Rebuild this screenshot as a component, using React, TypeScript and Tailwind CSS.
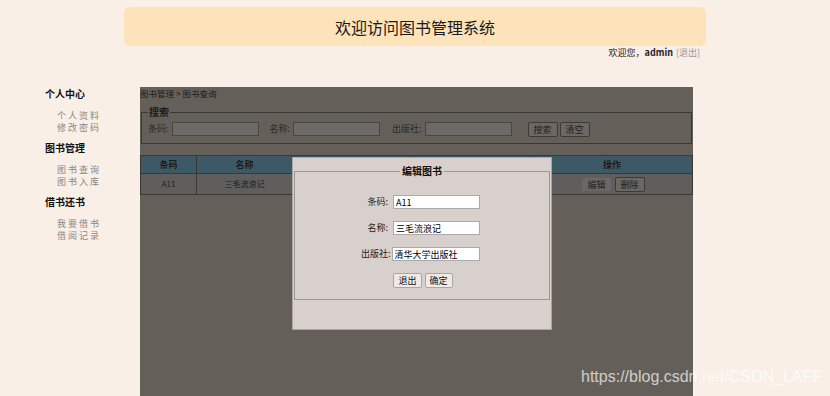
import React from 'react';

const font = { fontFamily: '"Noto Sans CJK SC", "Noto Sans", sans-serif' };

const menu = [
  { title: '个人中心', items: ['个人资料', '修改密码'] },
  { title: '图书管理', items: ['图书查询', '图书入库'] },
  { title: '借书还书', items: ['我要借书', '借阅记录'] },
];

function DimButton({ children, active }: { children: React.ReactNode; active?: boolean }) {
  return (
    <button
      className={
        'h-[15px] px-[5px] text-[9px] leading-none text-[#222] bg-[#6a6764] rounded-[2px] border ' +
        (active ? 'border-[#3d6590]' : 'border-[#3c3a38]')
      }
    >
      {children}
    </button>
  );
}

function ModalRow({ label, value, wide }: { label: string; value: string; wide?: boolean }) {
  return (
    <div className="flex items-center justify-center pr-[4px]">
      <span className={'text-[9px] text-[#222] text-right ' + (wide ? 'w-[30px]' : 'w-[28px] mr-[5px]')}>{label}</span>
      <input
        readOnly
        value={value}
        className={
          'h-[14px] bg-white border border-[#aaa] px-[2px] text-[9px] text-black outline-none ' +
          (wide ? 'w-[88px] ml-[1px]' : 'w-[87px]')
        }
      />
    </div>
  );
}

export default function App() {
  return (
    <div className="relative w-[830px] h-[396px] overflow-hidden bg-[#f9efe6]" style={font}>
      <div className="pt-[7px]">
        <div className="mx-auto w-[582px] h-[39px] rounded-[6px] bg-[#fde3b9] flex items-center justify-center text-[16px] text-[#1a1a1a]">
          欢迎访问图书管理系统
        </div>
        <div className="mx-auto w-[582px] flex justify-end pr-[6px] pt-[1px] text-[9px] leading-[12px] text-[#222]">
          欢迎您，<b className="font-bold">admin</b>
          <span className="ml-[3px] text-[#999]">[退出]</span>
        </div>
      </div>

      <div className="flex mt-[28px]">
        <div className="w-[140px] pl-[45px] pt-[1px]">
          {menu.map((g) => (
            <div key={g.title} className="mb-[8px]">
              <div className="text-[10px] font-bold leading-[12px] text-[#111]">{g.title}</div>
              <div className="mt-[10px] pl-[12px] flex flex-col">
                {g.items.map((it) => (
                  <span key={it} className="block h-[12px] text-[9px] leading-[12px] tracking-[2px] text-[#888]">
                    {it}
                  </span>
                ))}
              </div>
            </div>
          ))}
        </div>

        <div className="relative w-[553px] h-[320px] bg-[#646059]">
          <div className="text-[8.5px] leading-[12px] text-[#1c1c1c]">图书管理 &gt; 图书查询</div>
          <fieldset className="mx-[1px] mt-[7px] border border-[#3a3835] px-[6px] pb-[6px]">
            <legend className="text-[10px] font-bold px-[1px] leading-[12px] text-[#1c1c1c]">搜索</legend>
            <div className="flex items-center h-[16px] mt-[3px] text-[9px] text-[#2a2a2a]">
              <span>条码:</span>
              <input readOnly className="ml-[3px] w-[87px] h-[14px] bg-[#6b6a68] border border-[#48463f] outline-none" />
              <span className="ml-[11px]">名称:</span>
              <input readOnly className="ml-[3px] w-[87px] h-[14px] bg-[#6b6a68] border border-[#48463f] outline-none" />
              <span className="ml-[12px]">出版社:</span>
              <input readOnly className="ml-[3px] w-[87px] h-[14px] bg-[#6b6a68] border border-[#48463f] outline-none" />
              <div className="ml-[16px] flex gap-[2px]">
                <DimButton>搜索</DimButton>
                <DimButton>清空</DimButton>
              </div>
            </div>
          </fieldset>

          <table className="mt-[11px] w-full border-collapse text-[9px] text-[#1c1c1c]">
            <thead>
              <tr className="h-[18px] bg-[#3e5966]">
                <th className="w-[56px] border border-[#3a3835] font-bold">条码</th>
                <th className="w-[96px] border border-[#3a3835] font-bold">名称</th>
                <th className="w-[118px] border border-[#3a3835] font-bold">作者</th>
                <th className="w-[121px] border border-[#3a3835] font-bold">出版社</th>
                <th className="border border-[#3a3835] font-bold">操作</th>
              </tr>
            </thead>
            <tbody>
              <tr className="h-[21px] bg-[#5f5e5c]">
                <td className="border border-[#3a3835] text-center text-[8px]">A11</td>
                <td className="border border-[#3a3835] text-center text-[8px]">三毛流浪记</td>
                <td className="border border-[#3a3835] text-center text-[8px]">张乐平</td>
                <td className="border border-[#3a3835] text-center text-[8px]">清华大学出版社</td>
                <td className="border border-[#3a3835] text-center">
                  <div className="flex justify-center gap-[3px] pl-[2px]">
                    <DimButton active>编辑</DimButton>
                    <DimButton>删除</DimButton>
                  </div>
                </td>
              </tr>
            </tbody>
          </table>

          <div className="absolute left-[152px] top-[70px] w-[260px] h-[173px] bg-[#d8d0cc] border border-[#a9a5a2] px-[1px]">
            <fieldset className="border border-[#9c9896] h-[135px] mt-[7px]">
              <legend className="mx-auto px-[2px] text-[10px] font-bold leading-[12px] text-[#111]">编辑图书</legend>
              <div className="flex flex-col gap-[12px] pt-[18px]">
                <ModalRow label="条码:" value="A11" />
                <ModalRow label="名称:" value="三毛流浪记" />
                <ModalRow label="出版社:" value="清华大学出版社" wide />
              </div>
              <div className="flex justify-center gap-[3px] mt-[12px] pl-[2px]">
                <button className="h-[15px] px-[4px] text-[9px] leading-none bg-[#eeeae8] border border-[#a9a5a2] rounded-[2px] text-[#111]">退出</button>
                <button className="h-[15px] px-[4px] text-[9px] leading-none bg-[#eeeae8] border border-[#a9a5a2] rounded-[2px] text-[#111]">确定</button>
              </div>
            </fieldset>
          </div>
        </div>
      </div>

      <div
        className="absolute left-[581px] top-[367px] text-[16px] leading-[20px] text-white/70"
        style={{ fontFamily: '"Liberation Sans", Arial, sans-serif' }}
      >
        https://blog.csdn.net/CSDN_LAFF
      </div>
    </div>
  );
}
